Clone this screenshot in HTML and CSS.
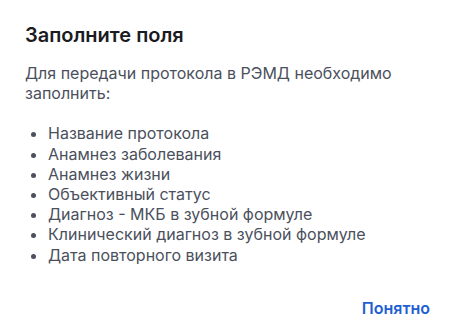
FILE: index.html
```html
<!DOCTYPE html>
<html lang="ru">
<head>
<meta charset="utf-8">
<link rel="stylesheet" href="styles.css">
</head>
<body>
<div class="dialog">
  <h2 class="title">Заполните поля</h2>
  <div class="content">
    <p class="lead">Для передачи протокола в РЭМД необходимо заполнить:</p>
    <ul class="fields">
      <li>Название протокола</li>
      <li>Анамнез заболевания</li>
      <li>Анамнез жизни</li>
      <li>Объективный статус</li>
      <li>Диагноз - МКБ в зубной формуле</li>
      <li>Клинический диагноз в зубной формуле</li>
      <li>Дата повторного визита</li>
    </ul>
  </div>
  <div class="actions">
    <button class="btn">Понятно</button>
  </div>
</div>
</body>
</html>
```
FILE: styles.css
```css
html, body {
  margin: 0;
  padding: 0;
  background: #ffffff;
}
body {
  font-family: Inter, "Noto Sans", sans-serif;
  width: 454px;
  height: 336px;
  overflow: hidden;
}
.dialog {
  box-sizing: border-box;
  width: 454px;
  height: 336px;
  padding: 21px 24px 0 25px;
  display: flex;
  flex-direction: column;
}
.title {
  margin: 0;
  font-size: 20px;
  line-height: 28px;
  font-weight: 600;
  color: #1b1c1f;
}
.content {
  margin-top: 14px;
  font-size: 16px;
  line-height: 20.2px;
  color: #4a505c;
}
.lead {
  margin: 0 0 20px 0;
  width: 400px;
}
.fields {
  margin: 0;
  padding-left: 23px;
}
.actions {
  display: flex;
  justify-content: flex-end;
  margin-top: 33px;
}
.btn {
  border: none;
  background: none;
  padding: 0;
  font-family: inherit;
  font-size: 16px;
  font-weight: 600;
  line-height: 20px;
  color: #1f5fd1;
  cursor: pointer;
}
```
